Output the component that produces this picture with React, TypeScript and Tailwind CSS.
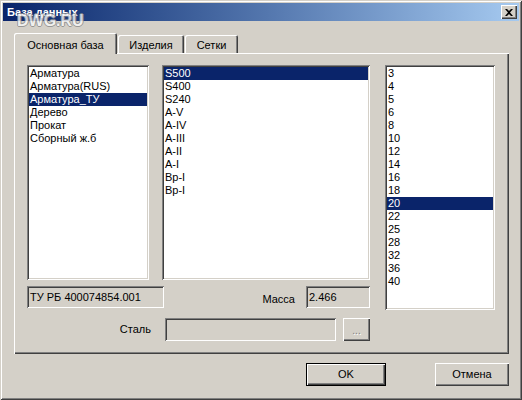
import React from "react";

const sunken =
  "shadow-[inset_1px_1px_#808080,inset_-1px_-1px_#ffffff,inset_2px_2px_#404040,inset_-2px_-2px_#d4d0c8]";
const raised =
  "shadow-[inset_1px_1px_#ffffff,inset_-1px_-1px_#404040,inset_-2px_-2px_#808080]";

function ListBox({
  items,
  selected,
  className,
}: {
  items: string[];
  selected: number;
  className: string;
}) {
  return (
    <div className={`bg-white p-[2px] overflow-hidden ${sunken} ${className}`}>
      {items.map((t, i) => (
        <div
          key={i}
          className={`h-[13px] leading-[13px] pl-[1px] whitespace-nowrap ${
            i === selected ? "bg-[#0a246a] text-white" : "text-black"
          }`}
        >
          {t}
        </div>
      ))}
    </div>
  );
}

function Field({ className, children }: { className: string; children?: React.ReactNode }) {
  return (
    <div className={`bg-[#d4d0c8] flex items-center pl-[3px] whitespace-nowrap ${sunken} ${className}`}>
      {children}
    </div>
  );
}

export default function App() {
  return (
    <div
      className={`relative w-[522px] h-[400px] bg-[#d4d0c8] p-[3px] text-[11px] text-black font-['Liberation_Sans',Arial,sans-serif] shadow-[inset_1px_1px_#d4d0c8,inset_-1px_-1px_#404040,inset_2px_2px_#ffffff,inset_-2px_-2px_#808080]`}
    >
      {/* Title bar */}
      <div className="h-[18px] flex items-center justify-between pl-[4px] pr-[2px] bg-gradient-to-r from-[#0a246a] to-[#a6caf0]">
        <span className="text-white font-bold text-[11px] leading-[18px]">База данных</span>
        <div className={`w-[16px] h-[14px] bg-[#d4d0c8] flex items-center justify-center ${raised}`}>
          <svg width="8" height="7" viewBox="0 0 8 7">
            <path d="M0 0h2l2 2 2-2h2L5 3.5 8 7H6L4 5 2 7H0l3-3.5z" fill="#000" />
          </svg>
        </div>
      </div>

      {/* Watermark */}
      <div className="absolute left-[17px] top-[13px] text-[16px] font-bold leading-[16px] text-[#f8f8f8] opacity-80 [text-shadow:1px_0_#8a8a8a,-1px_0_#8a8a8a,0_1px_#8a8a8a,0_-1px_#8a8a8a] pointer-events-none">
        DWG.RU
      </div>

      {/* Body */}
      <div className="pl-[11px] pr-[10px] pt-[12px]">
        {/* Tabs */}
        <div className="flex items-end h-[20px]">
          <div className="relative z-10 h-[21px] -mb-[1px] w-[103px] bg-[#d4d0c8] rounded-tl-[2px] rounded-tr-[2px] shadow-[inset_1px_1px_#ffffff,inset_-1px_0_#404040,inset_-2px_0_#808080] flex items-start justify-center pt-[6px] leading-[12px]">
            Основная база
          </div>
          <div className="h-[18px] w-[66px] ml-[1px] rounded-tl-[2px] rounded-tr-[2px] shadow-[inset_1px_1px_#ffffff,inset_-1px_0_#404040,inset_-2px_0_#808080] flex items-start justify-center pt-[4px] leading-[12px]">
            Изделия
          </div>
          <div className="h-[18px] w-[53px] ml-[1px] rounded-tl-[2px] rounded-tr-[2px] shadow-[inset_1px_1px_#ffffff,inset_-1px_0_#404040,inset_-2px_0_#808080] flex items-start justify-center pt-[4px] leading-[12px]">
            Сетки
          </div>
        </div>

        {/* Panel */}
        <div className="w-[495px] h-[301px] pl-[13px] pt-[12px] flex shadow-[inset_1px_1px_#ffffff,inset_-1px_-1px_#404040,inset_-2px_-2px_#808080]">
          <div className="w-[343px] flex flex-col">
            <div className="flex gap-[13px] h-[215px]">
              <ListBox
                className="w-[122px] h-[215px]"
                selected={2}
                items={["Арматура", "Арматура(RUS)", "Арматура_ТУ", "Дерево", "Прокат", "Сборный ж.б"]}
              />
              <ListBox
                className="w-[208px] h-[215px]"
                selected={0}
                items={["S500", "S400", "S240", "A-V", "A-IV", "A-III", "A-II", "A-I", "Bp-I", "Bp-I"]}
              />
            </div>
            <div className="flex mt-[6px] h-[22px] items-start">
              <Field className="w-[137px] h-[22px]">ТУ РБ 400074854.001</Field>
              <span className="ml-auto mr-[11px] mt-[7px] leading-[13px]">Масса</span>
              <Field className="w-[64px] h-[22px]">2.466</Field>
            </div>
            <div className="flex mt-[10px] h-[23px] items-center">
              <span className="w-[124px] text-right leading-[13px]">Сталь</span>
              <Field className="ml-[14px] w-[171px] h-[23px]" />
              <div className={`ml-[7px] w-[27px] h-[23px] bg-[#d4d0c8] flex items-center justify-center text-[#808080] [text-shadow:1px_1px_#ffffff] ${raised}`}>
                <span className="text-[10px] leading-[10px] mt-[3px]">...</span>
              </div>
            </div>
          </div>
          <ListBox
            className="ml-[15px] w-[110px] h-[245px]"
            selected={10}
            items={["3", "4", "5", "6", "8", "10", "12", "14", "16", "18", "20", "22", "25", "28", "32", "36", "40"]}
          />
        </div>

        {/* Buttons */}
        <div className="flex justify-end mt-[9px]">
          <div className="w-[80px] h-[23px] border border-black bg-[#d4d0c8] flex items-center justify-center shadow-[inset_1px_1px_#ffffff,inset_-1px_-1px_#404040,inset_-2px_-2px_#808080]">
            OK
          </div>
          <div className={`ml-[49px] w-[74px] h-[23px] bg-[#d4d0c8] flex items-center justify-center ${raised}`}>
            Отмена
          </div>
        </div>
      </div>
    </div>
  );
}
